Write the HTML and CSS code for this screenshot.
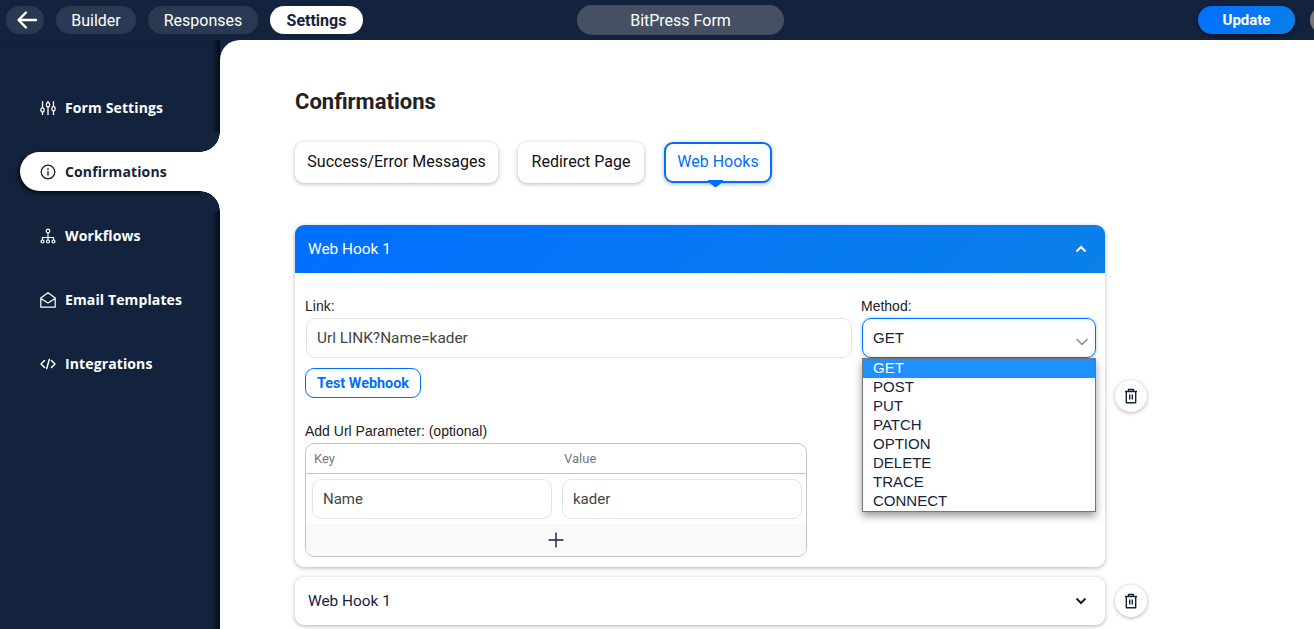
FILE: index.html
```html
<!DOCTYPE html>
<html lang="en">
<head>
  <meta charset="UTF-8">
  <meta name="viewport" content="width=device-width, initial-scale=1.0">
  <title>BitPress Form</title>
  <link rel="stylesheet" href="styles.css">
</head>
<body>
  <header class="topbar">
    <nav class="topnav">
      <a class="pill back">
        <svg width="22" height="20" viewBox="0 0 22 20" fill="none" stroke="#fff" stroke-width="2.4" stroke-linecap="round" stroke-linejoin="round"><path d="M20 10H3M10 2.500 2.500 10l7.500 7.500"/></svg>
      </a>
      <a class="pill builder">Builder</a>
      <a class="pill responses">Responses</a>
      <a class="pill settings">Settings</a>
    </nav>
    <div class="form-name">BitPress Form</div>
    <button class="update">Update</button>
    <span class="avatar"></span>
  </header>

  <div class="layout">
    <aside class="sidebar">
      <a class="side-item">
        <svg width="16" height="16" viewBox="0 0 16 16" fill="none" stroke="#fff" stroke-width="1.300"><path d="M2.500 1v6.800M2.500 12v3M8 1v1.500M8 7v8M13.500 1v5.500M13.500 11v4"/><rect x=".9" y="7.800" width="3.200" height="4.200" rx="1.600"/><rect x="6.400" y="2.600" width="3.200" height="4.200" rx="1.600"/><rect x="11.900" y="6.600" width="3.200" height="4.200" rx="1.600"/></svg>
        Form Settings
      </a>
      <a class="side-item active">
        <svg width="16" height="16" viewBox="0 0 16 16" fill="none" stroke="#14233d" stroke-width="1.300"><circle cx="8" cy="8" r="6.800"/><path d="M8 7.200v4.300" stroke-width="1.500"/><path d="M8 4.300v1.400" stroke-width="1.600"/></svg>
        Confirmations
      </a>
      <a class="side-item">
        <svg width="16" height="16" viewBox="0 0 16 16" fill="none" stroke="#fff" stroke-width="1.200"><circle cx="8" cy="3" r="1.800"/><circle cx="2.500" cy="13.500" r="1.500"/><circle cx="8" cy="13.500" r="1.500"/><circle cx="13.500" cy="13.500" r="1.500"/><path d="M8 5v7M2.500 12V9.500h11V12"/></svg>
        Workflows
      </a>
      <a class="side-item">
        <svg width="16" height="16" viewBox="0 0 16 16" fill="none" stroke="#fff" stroke-width="1.200" stroke-linejoin="round"><path d="M.8 15.200V6L8 .8 15.200 6v9.200zM.8 6.500 8 11l7.200-4.500"/></svg>
        Email Templates
      </a>
      <a class="side-item">
        <svg width="16" height="16" viewBox="0 0 16 16" fill="none" stroke="#fff" stroke-width="1.500" stroke-linecap="round" stroke-linejoin="round"><path d="M4.500 4.500 1 8l3.500 3.500M11.500 4.500 15 8l-3.500 3.500M9.300 3.500 6.700 12.500"/></svg>
        Integrations
      </a>
    </aside>

    <main class="content">
      <h2 class="page-title">Confirmations</h2>

      <div class="tabs">
        <button class="tab tab-success">Success/Error Messages</button>
        <button class="tab tab-redirect">Redirect Page</button>
        <button class="tab tab-on">Web Hooks</button>
      </div>

      <div class="hook-row">
        <section class="hook open">
          <div class="hook-head">
            <span>Web Hook 1</span>
            <svg width="12" height="8" viewBox="0 0 12 8" fill="none" stroke="#fff" stroke-width="2"><path d="M1.500 6.500 6 2l4.500 4.500"/></svg>
          </div>
          <div class="hook-body">
            <div class="fields">
              <div class="field-link">
                <label class="lbl">Link:</label>
                <div class="input">Url LINK?Name=kader</div>
              </div>
              <div class="field-method">
                <label class="lbl">Method:</label>
                <div class="select">
                  GET
                  <svg class="caret" width="14" height="8" viewBox="0 0 14 8" fill="none" stroke="#888" stroke-width="1.500"><path d="M1.500 1 7 6.500 12.500 1"/></svg>
                </div>
                <ul class="options">
                  <li class="picked">GET</li>
                  <li>POST</li>
                  <li>PUT</li>
                  <li>PATCH</li>
                  <li>OPTION</li>
                  <li>DELETE</li>
                  <li>TRACE</li>
                  <li>CONNECT</li>
                </ul>
              </div>
            </div>
            <button class="test-btn">Test Webhook</button>
            <div class="lbl param-lbl">Add Url Parameter: (optional)</div>
            <div class="params">
              <div class="params-head">
                <span>Key</span>
                <span>Value</span>
              </div>
              <div class="params-row">
                <div class="input">Name</div>
                <div class="input">kader</div>
              </div>
              <div class="params-add">
                <svg width="16" height="16" viewBox="0 0 16 16" fill="none" stroke="#14233d" stroke-width="1.400"><path d="M8 .5v15M.5 8h15"/></svg>
              </div>
            </div>
          </div>
        </section>
        <button class="del">
          <svg width="14" height="16" viewBox="0 0 14 16" fill="none" stroke="#14233d" stroke-width="1.400" stroke-linejoin="round"><path d="M1 3.500h12M4.500 3.500V1.500h5v2M2.300 3.500v11.200h9.400V3.500M5.700 6.500v5M8.300 6.500v5"/></svg>
        </button>
      </div>

      <div class="hook-row">
        <section class="hook">
          <div class="hook-head">
            <span>Web Hook 1</span>
            <svg width="12" height="8" viewBox="0 0 12 8" fill="none" stroke="#14233d" stroke-width="2"><path d="M1.500 1.500 6 6l4.500-4.500"/></svg>
          </div>
        </section>
        <button class="del">
          <svg width="14" height="16" viewBox="0 0 14 16" fill="none" stroke="#14233d" stroke-width="1.400" stroke-linejoin="round"><path d="M1 3.500h12M4.500 3.500V1.500h5v2M2.300 3.500v11.200h9.400V3.500M5.700 6.500v5M8.300 6.500v5"/></svg>
        </button>
      </div>
    </main>
  </div>
</body>
</html>
```

FILE: styles.css
```css
:root {
  --navy: #14233d;
  --blue: #006fff;
  --line: #e3e3e3;
}
* {
  box-sizing: border-box;
}
html, body {
  margin: 0;
  height: 100%;
  overflow: hidden;
}
body {
  font-family: Roboto, "Liberation Sans", sans-serif;
  background: var(--navy);
  color: #14233d;
  font-size: 14px;
}
button {
  font: inherit;
  cursor: pointer;
}

/* top bar */
.topbar {
  height: 40px;
  display: flex;
  align-items: center;
  position: relative;
  padding-left: 6px;
}
.topbar > * {
  flex: none;
}
.topnav {
  display: flex;
  gap: 12px;
}
.pill {
  height: 28px;
  border-radius: 14px;
  background: #2b3a53;
  color: #fff;
  font-size: 16px;
  display: flex;
  align-items: center;
  justify-content: center;
}
.back {
  width: 38px;
  padding-left: 4px;
}
.builder {
  width: 80px;
}
.responses {
  width: 110px;
}
.settings {
  width: 93px;
  background: #fff;
  color: var(--navy);
  font-weight: 700;
}
.form-name {
  width: 207px;
  height: 30px;
  margin-left: 214px;
  border-radius: 15px;
  background: #455064;
  color: #fff;
  font-size: 16px;
  display: flex;
  align-items: center;
  justify-content: center;
}
.update {
  width: 97px;
  height: 28px;
  margin-left: 414px;
  border: none;
  border-radius: 14px;
  background: linear-gradient(135deg, #006fff, #0a80e8);
  color: #fff;
  font-weight: 700;
  font-size: 15px;
  box-shadow: 0 2px 4px rgba(0, 0, 0, .5);
}
.avatar {
  width: 28px;
  height: 28px;
  margin-left: 15px;
  border-radius: 50%;
  background: #777;
}

.layout {
  display: grid;
  grid-template-columns: 220px 1fr;
  height: 589px;
}

/* sidebar */
.sidebar {
  padding-top: 48px;
  display: flex;
  flex-direction: column;
  align-items: flex-end;
  box-shadow: inset -8px 0 6px -5px rgba(0, 0, 0, .85);
}
.side-item {
  width: 200px;
  height: 39px;
  margin-bottom: 25px;
  padding-left: 20px;
  display: flex;
  align-items: center;
  gap: 9px;
  color: #fff;
  font-family: "Open Sans", sans-serif;
  font-weight: 700;
  font-size: 14px;
  letter-spacing: .12px;
  position: relative;
}
.side-item.active {
  background: #fff;
  color: var(--navy);
  border-radius: 20px 0 0 20px;
  box-shadow: -2px 2px 4px rgba(0, 0, 0, .7);
}
.side-item.active::before,
.side-item.active::after {
  content: "";
  position: absolute;
  right: 0;
  width: 20px;
  height: 20px;
}
.side-item.active::before {
  top: -20px;
  background: radial-gradient(circle at 0 0, var(--navy) 19.500px, #fff 20px);
}
.side-item.active::after {
  bottom: -20px;
  background: radial-gradient(circle at 0 100%, var(--navy) 19.500px, #fff 20px);
}

/* content */
.content {
  background: #fff;
  border-top-left-radius: 20px;
  padding: 48px 0 0 75px;
  position: relative;
  z-index: 1;
}
.page-title {
  margin: 0;
  font-size: 22px;
  line-height: 28px;
  font-weight: 700;
  color: #222;
}
.tabs {
  display: flex;
  gap: 20px;
  margin-top: 26px;
  margin-bottom: 42px;
}
.tab {
  height: 41px;
  padding: 0 0 2px;
  border: none;
  border-radius: 9px;
  background: #fff;
  color: #111;
  font-size: 16px;
  box-shadow: 0 1px 4px rgba(0, 0, 0, .3);
}
.tab-success {
  width: 203px;
}
.tab-redirect {
  width: 126px;
}
.tab-on {
  width: 108px;
  border: 2px solid var(--blue);
  color: var(--blue);
  position: relative;
}
.tab-on::after {
  content: "";
  position: absolute;
  left: 50%;
  margin-left: -10px;
  bottom: -6px;
  width: 15px;
  height: 7px;
  background: var(--blue);
  clip-path: polygon(0 0, 100% 0, 100% 25%, 55% 100%, 45% 100%, 0 25%);
}

.hook-row {
  display: flex;
  align-items: center;
  gap: 10px;
  margin-bottom: 10px;
}
.hook {
  width: 810px;
  border-radius: 9px;
  background: #fff;
  box-shadow: 0 1px 4px rgba(0, 0, 0, .3);
}
.hook-head {
  height: 48px;
  padding: 0 18px 0 13px;
  display: flex;
  align-items: center;
  justify-content: space-between;
  font-size: 15.400px;
  border-radius: 9px;
}
.open .hook-head {
  background: linear-gradient(135deg, #006fff, #0a80e8);
  color: #fff;
  border-radius: 9px 9px 0 0;
}
.hook-body {
  height: 294px;
  padding: 25px 9px 0 10px;
}
.fields {
  display: flex;
  gap: 9px;
}
.field-link {
  width: 547px;
}
.field-method {
  width: 235px;
  position: relative;
}
.lbl {
  display: block;
  font-family: "Liberation Sans", sans-serif;
  font-size: 14px;
  line-height: 16px;
  margin-bottom: 4px;
  color: #222;
}
.field-link .input {
  margin-left: 1px;
  width: 546px;
  font-size: 15.400px;
}
.input {
  height: 40px;
  padding: 0 10px;
  border: 1px solid var(--line);
  border-radius: 9px;
  display: flex;
  align-items: center;
  color: #444;
  font-size: 15px;
  background: #fff;
}
.select {
  margin-left: 1px;
  height: 40px;
  padding: 0 10px 2px;
  border: 1px solid var(--blue);
  border-radius: 9px;
  box-shadow: 0 0 0 2px #e2eefe;
  display: flex;
  align-items: center;
  font-family: "Liberation Sans", sans-serif;
  font-size: 15px;
  position: relative;
}
.caret {
  position: absolute;
  right: 6px;
  top: 19px;
}
.options {
  position: absolute;
  left: 1px;
  top: 60px;
  width: 234px;
  margin: 0;
  padding: 0;
  list-style: none;
  background: #fff;
  border: 1px solid #767676;
  box-shadow: 0 4px 8px rgba(0, 0, 0, .4);
  font-family: "Liberation Sans", sans-serif;
  font-size: 15px;
  z-index: 2;
}
.options li {
  height: 19px;
  line-height: 17px;
  padding-left: 10px;
  color: #14233d;
}
.options .picked {
  background: #1e90ff;
  color: #fff;
}
.test-btn {
  display: block;
  width: 116px;
  height: 30px;
  margin-top: 10px;
  padding: 1px 0 0;
  border: 1px solid var(--blue);
  border-radius: 9px;
  background: #fff;
  color: var(--blue);
  font-weight: 700;
  font-size: 14.400px;
}
.param-lbl {
  margin-top: 25px;
  margin-bottom: 4px;
}
.params {
  width: 502px;
  height: 114px;
  border: 1px solid #c4c4c4;
  border-radius: 9px;
  overflow: hidden;
}
.params-head {
  height: 30px;
  display: grid;
  grid-template-columns: 250px 1fr;
  align-items: center;
  padding-left: 8px;
  border-bottom: 1px solid #c4c4c4;
  font-size: 13px;
  color: #777;
}
.params-row {
  display: grid;
  grid-template-columns: 240px 240px;
  gap: 10px;
  padding: 5px 0 5px 6px;
}
.params-add {
  height: 33px;
  padding-bottom: 2px;
  background: #f9f9f9;
  display: flex;
  align-items: center;
  justify-content: center;
}
.del {
  width: 32px;
  height: 32px;
  flex: none;
  padding: 0;
  border: none;
  border-radius: 50%;
  background: #fff;
  box-shadow: 0 1px 4px rgba(0, 0, 0, .3);
  display: flex;
  align-items: center;
  justify-content: center;
}
```
